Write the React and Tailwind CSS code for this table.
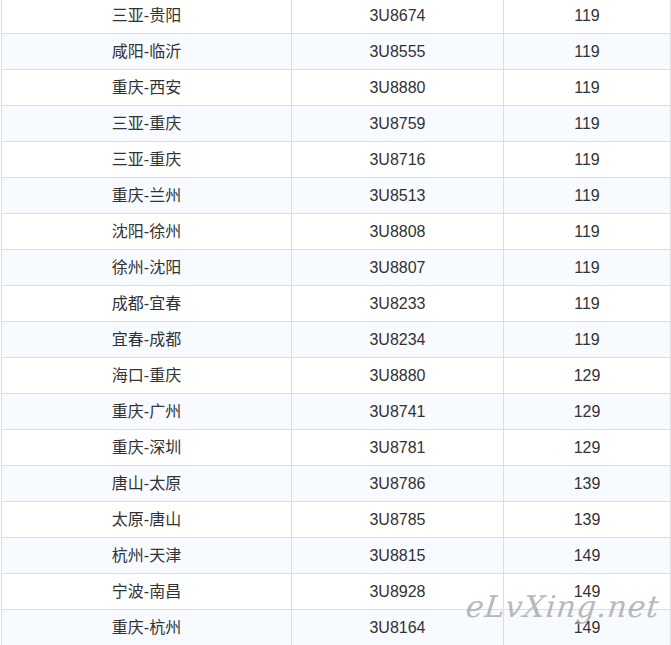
const rows = [
  ['三亚-贵阳', '3U8674', '119'],
  ['咸阳-临沂', '3U8555', '119'],
  ['重庆-西安', '3U8880', '119'],
  ['三亚-重庆', '3U8759', '119'],
  ['三亚-重庆', '3U8716', '119'],
  ['重庆-兰州', '3U8513', '119'],
  ['沈阳-徐州', '3U8808', '119'],
  ['徐州-沈阳', '3U8807', '119'],
  ['成都-宜春', '3U8233', '119'],
  ['宜春-成都', '3U8234', '119'],
  ['海口-重庆', '3U8880', '129'],
  ['重庆-广州', '3U8741', '129'],
  ['重庆-深圳', '3U8781', '129'],
  ['唐山-太原', '3U8786', '139'],
  ['太原-唐山', '3U8785', '139'],
  ['杭州-天津', '3U8815', '149'],
  ['宁波-南昌', '3U8928', '149'],
  ['重庆-杭州', '3U8164', '149'],
]

export default function App() {
  return (
    <div className="relative h-[645px] w-[671px] overflow-hidden bg-white pl-[1px] font-['Liberation_Sans','Noto_Sans_CJK_SC',sans-serif] text-[16px] text-[#333]">
      <table className="-mt-[3px] w-[669px] table-fixed border-collapse">
        <colgroup>
          <col className="w-[290px]" />
          <col className="w-[212px]" />
          <col className="w-[167px]" />
        </colgroup>
        <tbody>
          {rows.map((r, i) => (
            <tr key={i} className={i % 2 ? 'bg-[#f7faff]' : 'bg-white'}>
              {r.map((c, j) => (
                <td
                  key={j}
                  className="h-[36px] border border-[#dddddd] p-0 text-center align-middle leading-[20px]"
                >
                  {c}
                </td>
              ))}
            </tr>
          ))}
        </tbody>
      </table>

      {/* watermark */}
      <div className="pointer-events-none absolute left-[466px] top-[584px] -skew-x-6 font-['DejaVu_Serif',serif] text-[30px] italic tracking-[1px] text-[#a8a8a8] opacity-80">
        eLvXing.net
      </div>
    </div>
  )
}
